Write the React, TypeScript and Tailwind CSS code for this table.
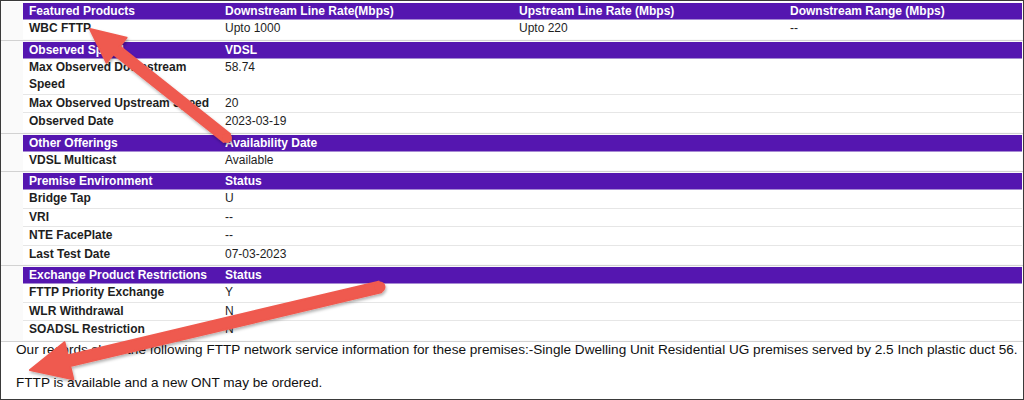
import React from 'react';

type Section = {
  head: string[];
  rows: string[][];
  cols: string;
};

const SECTIONS: Section[] = [
  {
    head: ['Featured Products', 'Downstream Line Rate(Mbps)', 'Upstream Line Rate (Mbps)', 'Downstream Range (Mbps)'],
    rows: [['WBC FTTP', 'Upto 1000', 'Upto 220', '--']],
    cols: 'grid-cols-[197px_294px_271px_1fr]',
  },
  {
    head: ['Observed Speed', 'VDSL'],
    rows: [
      ['Max Observed Downstream Speed', '58.74'],
      ['Max Observed Upstream Speed', '20'],
      ['Observed Date', '2023-03-19'],
    ],
    cols: 'grid-cols-[197px_1fr]',
  },
  {
    head: ['Other Offerings', 'Availability Date'],
    rows: [['VDSL Multicast', 'Available']],
    cols: 'grid-cols-[197px_1fr]',
  },
  {
    head: ['Premise Environment', 'Status'],
    rows: [
      ['Bridge Tap', 'U'],
      ['VRI', '--'],
      ['NTE FacePlate', '--'],
      ['Last Test Date', '07-03-2023'],
    ],
    cols: 'grid-cols-[197px_1fr]',
  },
  {
    head: ['Exchange Product Restrictions', 'Status'],
    rows: [
      ['FTTP Priority Exchange', 'Y'],
      ['WLR Withdrawal', 'N'],
      ['SOADSL Restriction', 'N'],
    ],
    cols: 'grid-cols-[197px_1fr]',
  },
];

// polygon for a straight arrow: tail -> tip
const arrowPath = (tx: number, ty: number, hx: number, hy: number, shaft: number, headLen: number, headW: number) => {
  const dx = hx - tx;
  const dy = hy - ty;
  const len = Math.hypot(dx, dy);
  const ux = dx / len;
  const uy = dy / len;
  const px = -uy;
  const py = ux;
  const bx = hx - ux * headLen;
  const by = hy - uy * headLen;
  const s = shaft / 2;
  const w = headW / 2;
  const pts = [
    [tx + px * s, ty + py * s],
    [bx + px * s, by + py * s],
    [bx + px * w, by + py * w],
    [hx, hy],
    [bx - px * w, by - py * w],
    [bx - px * s, by - py * s],
    [tx - px * s, ty - py * s],
  ];
  return 'M' + pts.map((p) => `${p[0].toFixed(1)} ${p[1].toFixed(1)}`).join(' L') + ' Z';
};

const Arrows = () => (
  <svg className="absolute inset-0 pointer-events-none" width={1024} height={400} viewBox="0 0 1024 400">
    <defs>
      <filter id="shadow" x="-10%" y="-10%" width="120%" height="120%">
        <feDropShadow dx="1" dy="2" stdDeviation="1.5" floodColor="#000" floodOpacity="0.3" />
      </filter>
    </defs>
    <g filter="url(#shadow)" fill="#ef5a4f" stroke="#ef5a4f" strokeWidth={2} strokeLinejoin="round">
      <path d={arrowPath(226, 137, 89, 28, 10, 34, 32)} />
      <circle cx={226} cy={137} r={5} stroke="none" />
      <path d={arrowPath(379, 286, 29, 369, 11, 40, 38)} />
      <circle cx={379} cy={286} r={5.5} stroke="none" />
    </g>
  </svg>
);

export default function App() {
  return (
    <div className="relative w-[1024px] h-[400px] overflow-hidden border border-[#3a3a3a] bg-white pt-[1px] font-['Liberation_Sans',Arial,sans-serif] text-[#1e1e1e]">
      {SECTIONS.map((sec, i) => (
        <div key={i} className="border-b border-[#d2d2d2] py-[1px] bg-[#fafafa]">
          <div className="ml-[22px] mr-[1px] bg-white">
            {/* Header */}
            <div className={`grid ${sec.cols} h-[17px] bg-[#5516b0] border-b border-[#a68ad3] text-white text-[12px] font-bold leading-[16px]`}>
              {sec.head.map((h, j) => (
                <div key={j} className={j === 0 ? 'pl-[6px]' : 'pl-[5px]'}>{h}</div>
              ))}
            </div>
            {/* Rows */}
            {sec.rows.map((r, k) => (
              <div key={k} className={`grid ${sec.cols} text-[12px] leading-[17.5px] ${k < sec.rows.length - 1 ? 'border-b border-[#e6e6e6]' : 'border-b border-white'}`}>
                {r.map((c, j) => (
                  <div key={j} className={j === 0 ? 'pl-[6px] pr-[8px] font-bold' : 'pl-[5px]'}>{c}</div>
                ))}
              </div>
            ))}
          </div>
        </div>
      ))}

      <div className="pl-[15px] text-[13.6px] leading-[16px] text-[#111]">
        <p className="whitespace-nowrap">
          Our records show the following FTTP network service information for these premises:-Single Dwelling Unit Residential UG premises served by 2.5 Inch plastic duct 56.
        </p>
        <p className="mt-[17px]">FTTP is available and a new ONT may be ordered.</p>
      </div>

      <Arrows />
    </div>
  );
}
